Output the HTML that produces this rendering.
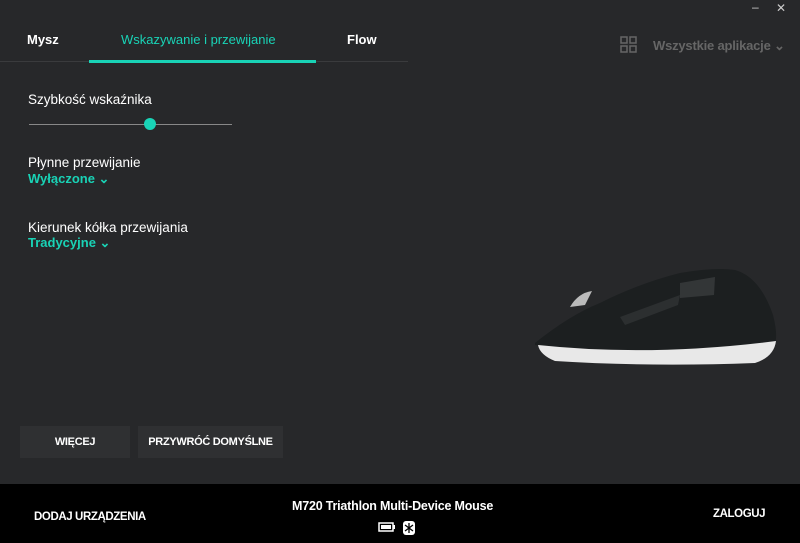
<!DOCTYPE html>
<html><head><meta charset="utf-8"><style>
*{margin:0;padding:0;box-sizing:border-box}
body{width:800px;height:543px;background:#27282a;font-family:"Liberation Sans",sans-serif;color:#fff;position:relative;overflow:hidden}
.a{position:absolute;white-space:nowrap}
.t{font-size:13px;font-weight:bold}
.g{color:#19d3b6}
.btn{position:absolute;background:#2f3032;font-size:11px;font-weight:bold;display:flex;align-items:center;justify-content:center;letter-spacing:-0.3px}
</style></head><body>
<div class="a" style="left:752px;top:0;font-size:12px;color:#ccc">–</div>
<div class="a" style="left:776px;top:1px;font-size:12px;color:#ccc">✕</div>
<div class="a t" style="left:27px;top:32px">Mysz</div>
<div class="a t g" style="left:121px;top:32px;font-weight:normal">Wskazywanie i przewijanie</div>
<div class="a t" style="left:347px;top:32px">Flow</div>
<div class="a" style="left:0;top:61px;width:408px;height:1px;background:#3a3b3d"></div>
<div class="a" style="left:89px;top:60px;width:227px;height:3px;background:#19d3b6"></div>
<svg class="a" style="left:620px;top:36px" width="17" height="17"><g fill="none" stroke="#666" stroke-width="1.5"><rect x="1" y="1" width="6" height="6"/><rect x="10" y="1" width="6" height="6"/><rect x="1" y="10" width="6" height="6"/><rect x="10" y="10" width="6" height="6"/></g></svg>
<div class="a" style="left:653px;top:38px;font-size:13px;color:#666;font-weight:bold;letter-spacing:-0.2px">Wszystkie aplikacje ⌄</div>
<div class="a" style="left:28px;top:92px;font-size:13.5px">Szybkość wskaźnika</div>
<div class="a" style="left:29px;top:124px;width:203px;height:1px;background:#888"></div>
<div class="a" style="left:144px;top:118px;width:12px;height:12px;border-radius:50%;background:#19d3b6"></div>
<div class="a" style="left:28px;top:155px;font-size:13.5px">Płynne przewijanie</div>
<div class="a g" style="left:28px;top:171px;font-size:13px;font-weight:bold">Wyłączone ⌄</div>
<div class="a" style="left:28px;top:220px;font-size:13.5px">Kierunek kółka przewijania</div>
<div class="a g" style="left:28px;top:235px;font-size:13px;font-weight:bold">Tradycyjne ⌄</div>
<svg class="a" style="left:530px;top:265px" width="250" height="105">
<path d="M5 78 Q40 50 70 38 Q110 18 150 8 Q185 2 205 5 Q230 12 243 50 Q248 70 245 78 Q150 92 5 80Z" fill="#1c1f20"/>
<path d="M8 80 Q120 92 246 76 Q244 92 225 98 Q120 102 25 96 Q10 90 8 80Z" fill="#e8e8e8"/>
<path d="M40 42 Q48 28 62 26 L55 40Z" fill="#bbb"/>
<path d="M90 52 L150 30 L148 40 L95 60Z" fill="#2c2f30"/>
<path d="M150 18 L185 12 L184 30 L150 33Z" fill="#333637"/>
</svg>
<div class="btn" style="left:20px;top:426px;width:110px;height:32px">WIĘCEJ</div>
<div class="btn" style="left:138px;top:426px;width:145px;height:32px">PRZYWRÓĆ DOMYŚLNE</div>
<div class="a" style="left:0;top:484px;width:800px;height:59px;background:#000"></div>
<div class="a" style="left:34px;top:511px;font-size:11.5px;font-weight:bold;letter-spacing:-0.4px">DODAJ URZĄDZENIA</div>
<div class="a" style="left:292px;top:499px;font-size:12.5px;font-weight:bold;letter-spacing:-0.2px">M720 Triathlon Multi-Device Mouse</div>
<svg class="a" style="left:378px;top:520px" width="40" height="16"><rect x="1" y="3" width="14" height="8" fill="none" stroke="#fff" stroke-width="1.5"/><rect x="3" y="5" width="10" height="4" fill="#fff"/><rect x="15" y="5" width="2" height="4" fill="#fff"/><rect x="25" y="1" width="12" height="14" rx="3" fill="#fff"/><path d="M31 3 V13 M27 5 L35 11 M35 5 L27 11" stroke="#000" stroke-width="1.3"/></svg>
<div class="a" style="left:713px;top:508px;font-size:11.5px;font-weight:bold;letter-spacing:-0.4px">ZALOGUJ</div>
</body></html>
